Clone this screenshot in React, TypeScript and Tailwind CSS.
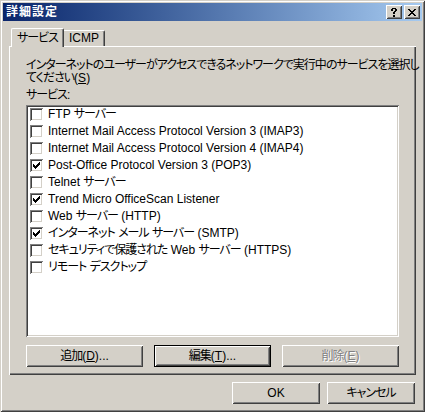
import React from "react";

function Pixels({ rows, color = "#000" }: { rows: string[]; color?: string }) {
  const w = rows[0].length;
  const h = rows.length;
  const rects: React.ReactNode[] = [];
  rows.forEach((r, y) => {
    r.split("").forEach((c, x) => {
      if (c === "X") rects.push(<rect key={`${x}-${y}`} x={x} y={y} width={1} height={1} />);
    });
  });
  return (
    <svg width={w} height={h} viewBox={`0 0 ${w} ${h}`} shapeRendering="crispEdges" fill={color} className="block">
      {rects}
    </svg>
  );
}

const HELP = [
  "..XXXX..",
  ".XX..XX.",
  ".XX..XX.",
  "....XX..",
  "...XX...",
  "...XX...",
  "........",
  "...XX...",
  "...XX...",
];

const CLOSE = [
  "XX....XX",
  ".XX..XX.",
  "..XXXX..",
  "...XX...",
  "..XXXX..",
  ".XX..XX.",
  "XX....XX",
];

const CHECK = [
  "......X",
  ".....XX",
  "X...XXX",
  "XX.XXX.",
  "XXXXX..",
  ".XXX...",
  "..X....",
];

const RAISED =
  "shadow-[inset_1px_1px_#ffffff,inset_-1px_-1px_#404040,inset_2px_2px_#d4d0c8,inset_-2px_-2px_#808080]";

// Wraps runs of Japanese characters in a slightly condensed span
function J({ text }: { text: string }) {
  const parts = text.split(/([\u3000-\u9fff\uff00-\uffef]+)/);
  return (
    <>
      {parts.map((p, i) =>
        /[\u3000-\u9fff\uff00-\uffef]/.test(p) ? (
          <span key={i} className="tracking-[-1px]">
            {p}
          </span>
        ) : (
          <React.Fragment key={i}>{p}</React.Fragment>
        )
      )}
    </>
  );
}

function CapBtn({ children }: { children: React.ReactNode }) {
  return (
    <div className={`w-[16px] h-[14px] bg-[#d4d0c8] flex items-center justify-center ${RAISED}`}>
      {children}
    </div>
  );
}

function CheckBox({ checked }: { checked: boolean }) {
  return (
    <span className="w-[13px] h-[13px] shrink-0 bg-white flex items-center justify-center shadow-[inset_1px_1px_#808080,inset_-1px_-1px_#ffffff,inset_2px_2px_#404040,inset_-2px_-2px_#d4d0c8]">
      {checked && <Pixels rows={CHECK} />}
    </span>
  );
}

function PushButton({
  children,
  isDefault,
  disabled,
  className = "",
}: {
  children: React.ReactNode;
  isDefault?: boolean;
  disabled?: boolean;
  className?: string;
}) {
  const inner = (
    <div
      className={`h-full w-full flex items-center justify-center bg-[#d4d0c8] ${RAISED} ${
        disabled ? "text-[#808080] [text-shadow:1px_1px_0_#ffffff]" : "text-black"
      }`}
    >
      {children}
    </div>
  );
  if (isDefault) {
    return <div className={`h-[22px] border border-black ${className}`}>{inner}</div>;
  }
  return <div className={`h-[22px] ${className}`}>{inner}</div>;
}

const ITEMS: { label: string; checked: boolean }[] = [
  { label: "FTP サーバー", checked: false },
  { label: "Internet Mail Access Protocol Version 3 (IMAP3)", checked: false },
  { label: "Internet Mail Access Protocol Version 4 (IMAP4)", checked: false },
  { label: "Post-Office Protocol Version 3 (POP3)", checked: true },
  { label: "Telnet サーバー", checked: false },
  { label: "Trend Micro OfficeScan Listener", checked: true },
  { label: "Web サーバー (HTTP)", checked: false },
  { label: "インターネット メール サーバー (SMTP)", checked: true },
  { label: "セキュリティで保護された Web サーバー (HTTPS)", checked: false },
  { label: "リモート デスクトップ", checked: false },
];

export default function App() {
  return (
    <div
      className="w-[425px] h-[412px] bg-[#d4d0c8] p-[3px] flex flex-col text-[12px] leading-[13px] text-black font-['Liberation_Sans','Noto_Sans_CJK_JP',sans-serif] [font-feature-settings:'palt'] shadow-[inset_1px_1px_#d4d0c8,inset_-1px_-1px_#404040,inset_2px_2px_#ffffff,inset_-2px_-2px_#808080]"
    >
      {/* Title bar */}
      <div className="h-[18px] shrink-0 bg-linear-to-r from-[#0a246a] to-[#a6caf0] flex items-center pl-[3px] pr-[2px]">
        <span className="text-white font-bold text-[12px] tracking-[1px]">詳細設定</span>
        <div className="ml-auto flex gap-[2px]">
          <CapBtn>
            <Pixels rows={HELP} />
          </CapBtn>
          <CapBtn>
            <Pixels rows={CLOSE} />
          </CapBtn>
        </div>
      </div>

      {/* Body */}
      <div className="flex-1 flex flex-col px-[6px] pt-[7px]">
        {/* Tab strip */}
        <div className="h-[18px] flex items-end pl-[2px]">
          <div className="relative z-10 -mb-px h-[19px] px-[5px] pt-[3px] bg-[#d4d0c8] border-l border-t border-r border-l-white border-t-white border-r-[#404040] rounded-tl-[2px] rounded-tr-[2px] shadow-[inset_-1px_0_#808080] flex items-start">
            <span className="whitespace-nowrap">
              <J text="サービス" />
            </span>
          </div>
          <div className="h-[16px] px-[5px] pt-[1px] bg-[#d4d0c8] border-t border-r border-t-white border-r-[#404040] rounded-tr-[2px] shadow-[inset_-1px_0_#808080] flex items-start">
            <span className="whitespace-nowrap">ICMP</span>
          </div>
        </div>

        {/* Panel */}
        <div className="h-[329px] px-[17px] pt-[13px] pb-[8px] flex flex-col shadow-[inset_1px_1px_#ffffff,inset_-1px_-1px_#404040,inset_-2px_-2px_#808080]">
          <div className="whitespace-nowrap">
            <div>
              <J text="インターネットのユーザーがアクセスできるネットワークで実行中のサービスを選択し" />
            </div>
            <div>
              <J text="てください" />(<u>S</u>)
            </div>
          </div>
          <div className="mt-[4px]">
            <J text="サービス" />:
          </div>
          <div className="mt-[3px] h-[232px] bg-white pt-[1px] pl-[4px] shadow-[inset_1px_1px_#808080,inset_-1px_-1px_#ffffff,inset_2px_2px_#404040,inset_-2px_-2px_#d4d0c8]">
            {ITEMS.map((it) => (
              <div key={it.label} className="h-[17px] flex items-center gap-[5px] whitespace-nowrap">
                <CheckBox checked={it.checked} />
                <span>
                  <J text={it.label} />
                </span>
              </div>
            ))}
          </div>
          <div className="mt-[8px] grid grid-cols-3 gap-[11px]">
            <PushButton>
              <span>
                <J text="追加" />(<u>D</u>)...
              </span>
            </PushButton>
            <PushButton isDefault>
              <span>
                <J text="編集" />(<u>T</u>)...
              </span>
            </PushButton>
            <PushButton disabled>
              <span>
                <J text="削除" />(<u>E</u>)
              </span>
            </PushButton>
          </div>
        </div>

        {/* Bottom buttons */}
        <div className="mt-[7px] flex justify-end gap-[7px] pr-[1px]">
          <PushButton className="w-[88px]">OK</PushButton>
          <PushButton className="w-[88px]">
            <J text="キャンセル" />
          </PushButton>
        </div>
      </div>
    </div>
  );
}
